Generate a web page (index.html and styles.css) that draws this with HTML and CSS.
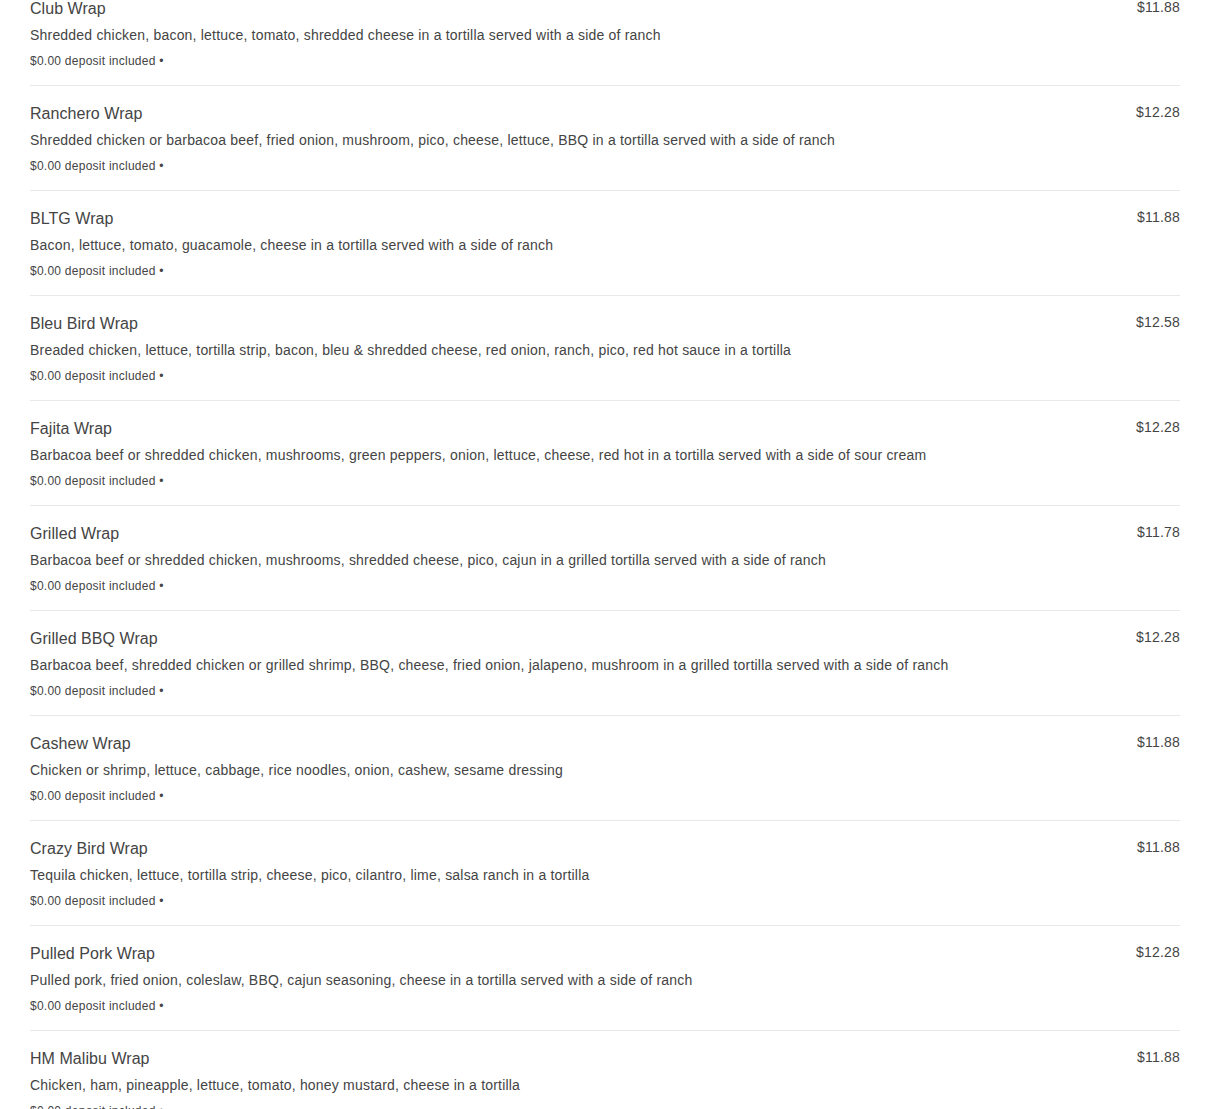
FILE: index.html
```html
<!DOCTYPE html>
<html>
<head>
<meta charset="utf-8">
<link rel="stylesheet" href="styles.css">
</head>
<body>
<ul class="menu">
  <li class="item"><div class="info"><div class="name">Club Wrap</div><div class="desc">Shredded chicken, bacon, lettuce, tomato, shredded cheese in a tortilla served with a side of ranch</div><div class="meta">$0.00 deposit included •</div></div><div class="price">$11.88</div></li>
  <li class="item"><div class="info"><div class="name">Ranchero Wrap</div><div class="desc">Shredded chicken or barbacoa beef, fried onion, mushroom, pico, cheese, lettuce, BBQ in a tortilla served with a side of ranch</div><div class="meta">$0.00 deposit included •</div></div><div class="price">$12.28</div></li>
  <li class="item"><div class="info"><div class="name">BLTG Wrap</div><div class="desc">Bacon, lettuce, tomato, guacamole, cheese in a tortilla served with a side of ranch</div><div class="meta">$0.00 deposit included •</div></div><div class="price">$11.88</div></li>
  <li class="item"><div class="info"><div class="name">Bleu Bird Wrap</div><div class="desc">Breaded chicken, lettuce, tortilla strip, bacon, bleu &amp; shredded cheese, red onion, ranch, pico, red hot sauce in a tortilla</div><div class="meta">$0.00 deposit included •</div></div><div class="price">$12.58</div></li>
  <li class="item"><div class="info"><div class="name">Fajita Wrap</div><div class="desc">Barbacoa beef or shredded chicken, mushrooms, green peppers, onion, lettuce, cheese, red hot in a tortilla served with a side of sour cream</div><div class="meta">$0.00 deposit included •</div></div><div class="price">$12.28</div></li>
  <li class="item"><div class="info"><div class="name">Grilled Wrap</div><div class="desc">Barbacoa beef or shredded chicken, mushrooms, shredded cheese, pico, cajun in a grilled tortilla served with a side of ranch</div><div class="meta">$0.00 deposit included •</div></div><div class="price">$11.78</div></li>
  <li class="item"><div class="info"><div class="name">Grilled BBQ Wrap</div><div class="desc">Barbacoa beef, shredded chicken or grilled shrimp, BBQ, cheese, fried onion, jalapeno, mushroom in a grilled tortilla served with a side of ranch</div><div class="meta">$0.00 deposit included •</div></div><div class="price">$12.28</div></li>
  <li class="item"><div class="info"><div class="name">Cashew Wrap</div><div class="desc">Chicken or shrimp, lettuce, cabbage, rice noodles, onion, cashew, sesame dressing</div><div class="meta">$0.00 deposit included •</div></div><div class="price">$11.88</div></li>
  <li class="item"><div class="info"><div class="name">Crazy Bird Wrap</div><div class="desc">Tequila chicken, lettuce, tortilla strip, cheese, pico, cilantro, lime, salsa ranch in a tortilla</div><div class="meta">$0.00 deposit included •</div></div><div class="price">$11.88</div></li>
  <li class="item"><div class="info"><div class="name">Pulled Pork Wrap</div><div class="desc">Pulled pork, fried onion, coleslaw, BBQ, cajun seasoning, cheese in a tortilla served with a side of ranch</div><div class="meta">$0.00 deposit included •</div></div><div class="price">$12.28</div></li>
  <li class="item"><div class="info"><div class="name">HM Malibu Wrap</div><div class="desc">Chicken, ham, pineapple, lettuce, tomato, honey mustard, cheese in a tortilla</div><div class="meta">$0.00 deposit included •</div></div><div class="price">$11.88</div></li>
</ul>
</body>
</html>
```
FILE: styles.css
```css
html, body {
  margin: 0;
  padding: 0;
  background: #fff;
  font-family: "Liberation Sans", Arial, sans-serif;
  color: #444;
  overflow: hidden;
}

.menu {
  list-style: none;
  margin: -19px 30px 0 30px;
  padding: 0;
}

.item {
  display: flex;
  justify-content: space-between;
  align-items: flex-start;
  padding: 18px 0 16px;
  border-bottom: 1px solid #e8e8e8;
}

.info {
  display: flex;
  flex-direction: column;
}

.name {
  font-size: 16px;
  line-height: 18px;
  margin-top: 1px;
  color: #444;
  letter-spacing: 0.05px;
}

.desc {
  font-size: 14px;
  line-height: 20px;
  margin-top: 7px;
  color: #444;
  letter-spacing: 0.2px;
}

.meta {
  font-size: 12px;
  line-height: 16px;
  margin-top: 8px;
  color: #444;
  letter-spacing: 0.25px;
}

.price {
  font-size: 14px;
  line-height: 16px;
  color: #444;
  letter-spacing: 0.2px;
  white-space: nowrap;
}
```
